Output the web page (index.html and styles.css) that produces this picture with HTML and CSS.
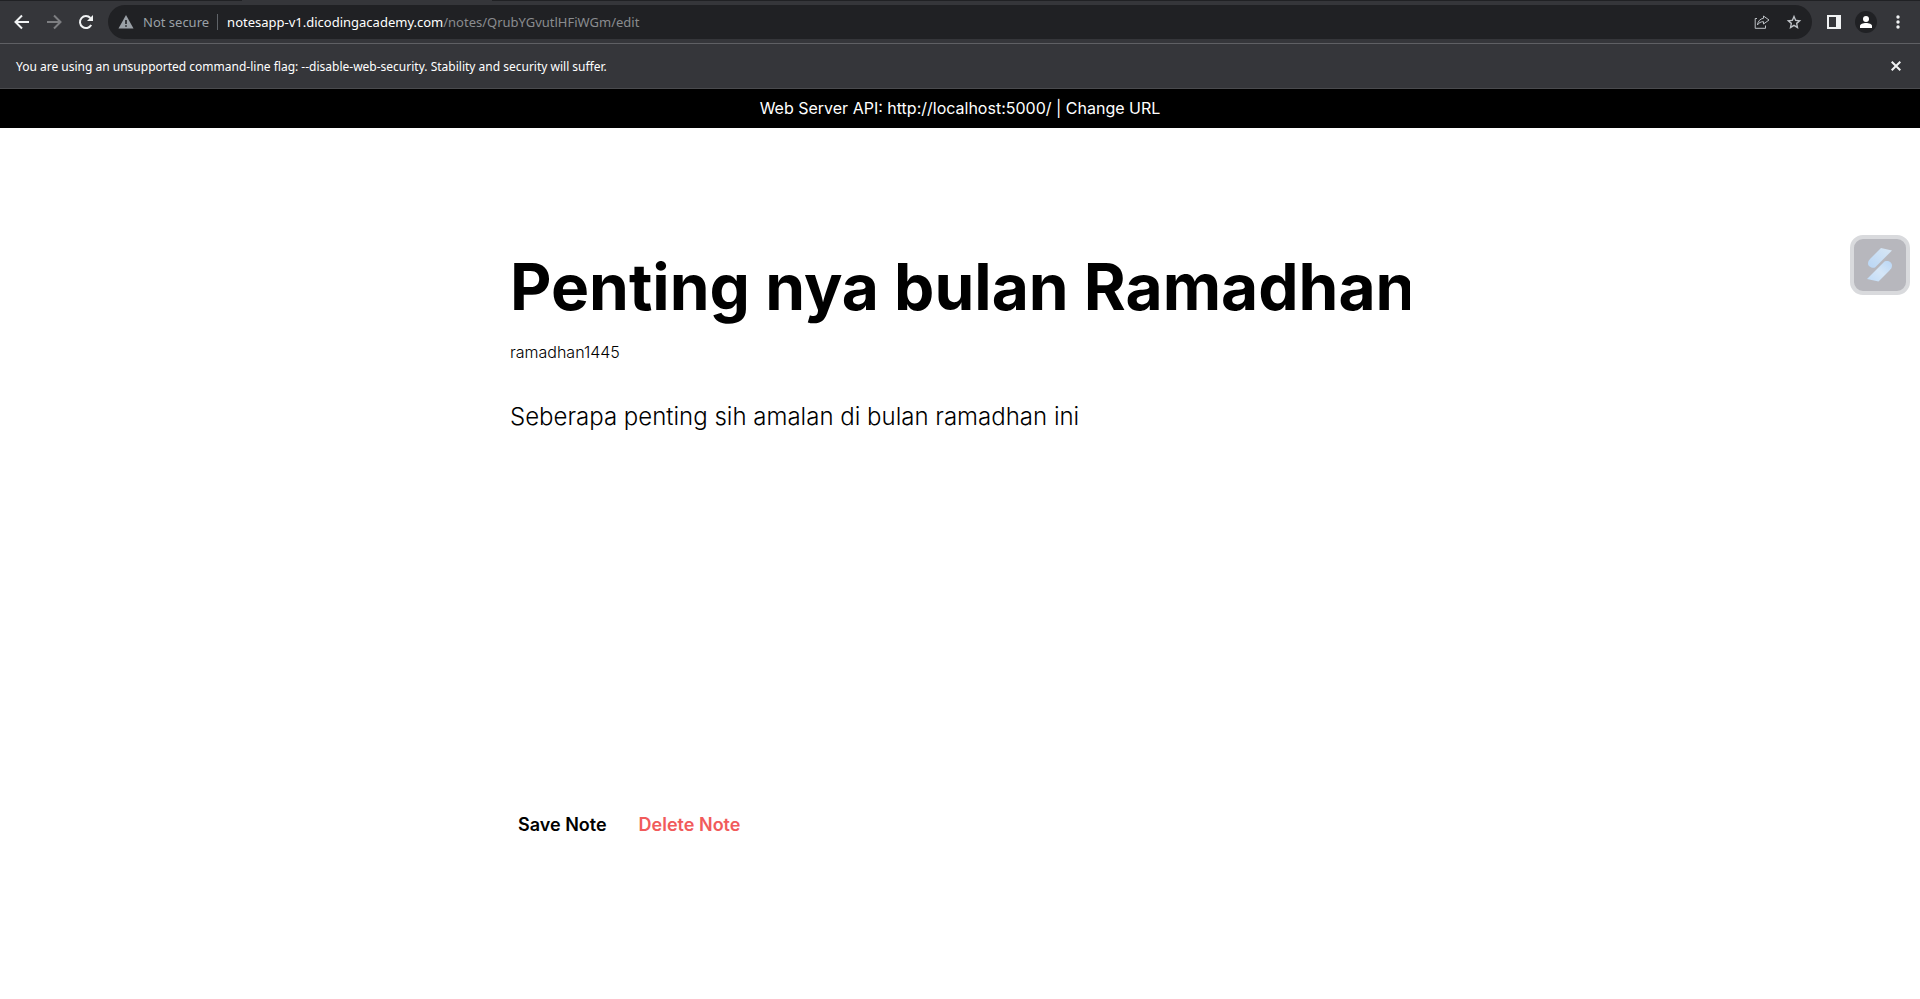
FILE: index.html
```html
<!DOCTYPE html>
<html lang="en">
<head>
<meta charset="utf-8">
<title>Edit note</title>
<link rel="stylesheet" href="styles.css">
</head>
<body>
<div class="tab-edge"><span class="tab-active"></span></div>
<nav class="toolbar" aria-label="Browser toolbar">
  <button class="tool" aria-label="Back"><svg width="16" height="16" viewBox="0 0 16 16"><path d="M15 8H2M8 1.500L1.500 8L8 14.500"/></svg></button>
  <button class="tool tool-off" aria-label="Forward"><svg width="16" height="16" viewBox="0 0 16 16"><path d="M1 8H14M8 1.500L14.500 8L8 14.500"/></svg></button>
  <button class="tool" aria-label="Reload"><svg width="16" height="16" viewBox="0 0 16 16"><path d="M13.200 11A6 6 0 1 1 12.400 4"/><path class="solid" d="M15 1V7H9Z"/></svg></button>
  <div class="omnibox">
    <button class="security"><svg width="16" height="14" viewBox="0 0 16 14"><path fill="#9aa0a6" d="M8 0L15.500 13.500H.5Z"/><path fill="#202124" d="M7.200 5h1.600v4H7.200zM7.200 10.200h1.600v1.600H7.200z"/></svg><span>Not secure</span></button>
    <a class="url" href="#note"><span class="host">notesapp-v1.dicodingacademy.com</span>/notes/QrubYGvutlHFiWGm/edit</a>
    <button class="tool small" aria-label="Share"><svg width="16" height="16" viewBox="0 0 16 16"><path d="M3 4.500H1.200V14.300H11.500V11.500M9.500 2L15 6L9.500 10V7.700C6.700 7.700 5 8.600 3.400 11C4 7.200 6 4.800 9.500 4.300Z"/></svg></button>
    <button class="tool small star" aria-label="Bookmark"><svg width="16" height="16" viewBox="0 0 16 16"><path fill-rule="evenodd" d="M8 .8L10.100 5.700L15.300 6.200L11.400 9.700L12.500 14.900L8 12.200L3.500 14.900L4.600 9.700L.7 6.200L5.900 5.700ZM8 4.200L6.800 6.900L4 7.200L6.100 9.100L5.500 12L8 10.500L10.500 12L9.900 9.100L12 7.200L9.200 6.900Z"/></svg></button>
  </div>
  <button class="tool" aria-label="Side panel"><svg width="14" height="14" viewBox="0 0 14 14"><path class="solid" fill-rule="evenodd" d="M0 0H14V14H0ZM2 2V12H9V2Z"/></svg></button>
  <button class="tool profile" aria-label="Profile"><svg width="12" height="12" viewBox="0 0 12 12"><circle class="solid" cx="6" cy="3" r="3"/><path class="solid" d="M0 12V10C0 8.200 3 7 6 7S12 8.200 12 10V12Z"/></svg></button>
  <button class="tool" aria-label="Menu"><svg width="4" height="14" viewBox="0 0 4 14"><circle class="solid" cx="2" cy="2" r="1.700"/><circle class="solid" cx="2" cy="7" r="1.700"/><circle class="solid" cx="2" cy="12" r="1.700"/></svg></button>
</nav>
<div class="infobar">
  <span>You are using an unsupported command-line flag: --disable-web-security. Stability and security will suffer.</span>
  <button class="tool" aria-label="Close"><svg width="10" height="10" viewBox="0 0 10 10"><path d="M.7.700L9.300 9.300M9.300.700L.7 9.300"/></svg></button>
</div>
<header class="api-bar">Web Server API: http://localhost:5000/ | <a href="#change">Change URL</a></header>
<main class="editor" id="note">
  <input class="title" aria-label="Title" value="Penting nya bulan Ramadhan">
  <input class="tags" aria-label="Tags" value="ramadhan1445">
  <textarea class="body" aria-label="Note">Seberapa penting sih amalan di bulan ramadhan ini</textarea>
  <div class="actions">
    <button class="action">Save Note</button>
    <button class="action danger">Delete Note</button>
  </div>
</main>
<button class="extension" aria-label="Open extension"><svg width="26" height="34" viewBox="0 0 26 34">
  <defs>
    <linearGradient id="upper" x1="1" y1="0" x2="0" y2="1"><stop offset="0" stop-color="#d9e7f4"/><stop offset="1" stop-color="#b9d6f5"/></linearGradient>
    <linearGradient id="lower" x1="1" y1="0" x2="0" y2="1"><stop offset="0" stop-color="#b9d6f5"/><stop offset=".5" stop-color="#d5e6f7"/><stop offset="1" stop-color="#c0dbf7"/></linearGradient>
  </defs>
  <path fill="url(#upper)" d="M14 0L25 2.500L8 19.500C5 20.500 1 18.500 1 15.500C1 13.500 2 12 3.500 10.500Z"/>
  <path fill="url(#lower)" d="M17.500 13.500C21 12 25 14 25 17.500C25 19.500 24 21 22.500 22.500L11.500 33.500L0 31Z"/>
</svg></button>
</body>
</html>
```
FILE: styles.css
```css
* { box-sizing: border-box; }
body { margin: 0; background: #fff; color: #000; font-family: Inter, sans-serif; font-size: 16px; }
button, input, textarea { margin: 0; padding: 0; border: 0; background: none; color: inherit; font: inherit; outline: 0; }
svg { display: block; }

.tab-edge { height: 1px; background: #202124; }
.tab-active { display: block; height: 1px; margin-left: 242px; width: 250px; background: #35363a; }

.toolbar { display: flex; align-items: center; height: 43px; padding: 0 6px 0 6px; background: #35363a; border-bottom: 1px solid #5f6064; font-family: "Noto Sans", sans-serif; }
.tool { display: flex; align-items: center; justify-content: center; flex: none; width: 32px; height: 32px; color: #f1f3f4; }
.tool path { fill: none; stroke: currentColor; stroke-width: 2; }
.tool .solid { fill: currentColor; stroke: none; }
.tool-off { color: #7d7e81; }
.small { width: 32px; color: #bdc1c6; }
.small path { stroke-width: 1; }
.star path { fill: currentColor; stroke: none; }
.omnibox { display: flex; align-items: center; flex: 1; height: 34px; margin: 0 6px; padding: 0 2px 0 10px; border-radius: 17px; background: #202124; font-size: 13px; }
.security { display: flex; align-items: center; gap: 9px; height: 16px; padding-right: 8px; border-right: 1px solid #5f6368; color: #9aa0a6; }
.url { flex: 1; margin-left: 9px; color: #8a8c8f; text-decoration: none; white-space: nowrap; }
.host { color: #fff; }
.profile { width: 22px; height: 22px; margin: 0 5px; border-radius: 50%; background: #202124; color: #fff; }

.infobar { display: flex; align-items: center; justify-content: space-between; height: 45px; padding: 0 8px 0 16px; background: #35363a; border-bottom: 1px solid #4a4b4e; color: #fff; font-family: "Noto Sans", sans-serif; font-size: 12px; }

.api-bar { padding: 10px; background: #000; color: #fff; line-height: 19px; text-align: center; }
.api-bar a { color: inherit; text-decoration: none; }

.editor { display: flex; flex-direction: column; width: 100%; max-width: 900px; margin: 120px auto 0; }
.title { height: 76px; font-size: 64px; font-weight: 700; }
.tags { height: 20px; margin-top: 18px; font-weight: 350; }
.body { height: 350px; margin-top: 40px; resize: none; font-size: 24px; font-weight: 350; line-height: 29px; }
.actions { display: flex; gap: 16px; margin-top: 54px; }
.action { padding: 8px; font-size: 18px; font-weight: 600; line-height: 22px; }
.danger { color: #f15b5b; }

.extension { position: fixed; top: 235px; right: 10px; display: flex; align-items: center; justify-content: center; width: 60px; height: 60px; border: 4px solid #d9dadd; border-radius: 13px; background: #b7b7bd; }
```
